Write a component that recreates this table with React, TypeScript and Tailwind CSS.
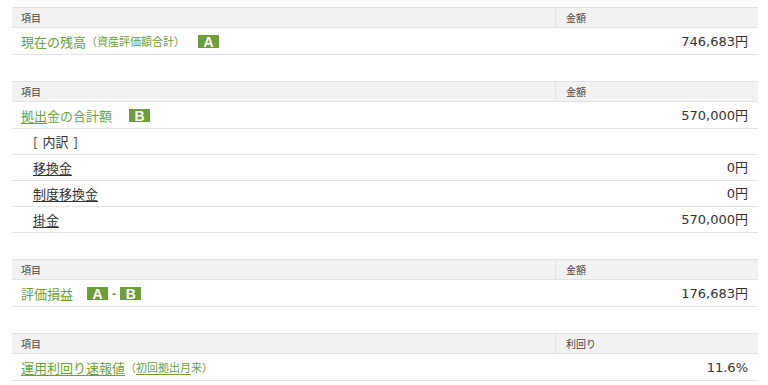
import React from "react";

const JP = { fontFamily: '"Noto Sans CJK JP", "Noto Sans", sans-serif' };
const NUM = { fontFamily: '"DejaVu Sans", "Noto Sans CJK JP", sans-serif' };

function Header({ right }: { right: string }) {
  return (
    <div className="flex h-[21px] border-y border-[#e2e2e2] bg-[#f2f2f2] text-[10px] leading-none text-[#444]" style={JP}>
      <div className="flex w-[544px] items-center border-r border-[#e4e4e4] pl-[9px]">項目</div>
      <div className="flex flex-1 items-center pl-[10px]">{right}</div>
    </div>
  );
}

function Badge({ children }: { children: React.ReactNode }) {
  return (
    <span
      className="inline-flex h-[13px] w-[21px] items-center justify-center bg-[#6c9f3a] pt-[1px] text-[14px] font-bold leading-none text-white"
      style={{ fontFamily: '"Liberation Sans", Arial, sans-serif' }}
    >
      {children}
    </span>
  );
}

function Row({ label, value, h = "h-[27px]" }: { label: React.ReactNode; value: string; h?: string }) {
  return (
    <div className={`flex ${h} items-center justify-between border-b border-[#e4e4e4] pl-[9px] pr-[10px]`}>
      <div className="flex items-center text-[13px] leading-none" style={JP}>
        {label}
      </div>
      <div className="text-[13px] leading-none text-[#333]" style={NUM}>
        {value}
      </div>
    </div>
  );
}

export default function App() {
  const green = "text-[#6aa23c]";
  return (
    <div className="min-h-[385px] w-[768px] bg-white pt-[7px]">
      <div className="ml-[12px] flex w-[746px] flex-col">
        <Header right="金額" />
        <Row
          label={
            <span className={`flex items-center ${green}`}>
              <span>現在の残高</span>
              <span className="text-[11px]">（資産評価額合計）</span>
              <span className="ml-[13px]">
                <Badge>A</Badge>
              </span>
            </span>
          }
          value="746,683円"
        />

        <div className="h-[26px]" />
        <Header right="金額" />
        <Row
          label={
            <span className={`flex items-center ${green}`}>
              <span>
                <span className="underline decoration-1 underline-offset-2">拠出</span>金の合計額
              </span>
              <span className="ml-[17px]">
                <Badge>B</Badge>
              </span>
            </span>
          }
          value="570,000円"
        />
        <Row
          h="h-[26px]"
          label={
            <span className="flex items-center pl-[12px] text-[#333]">
              <span>[</span>
              <span className="mx-[5px]">内訳</span>
              <span>]</span>
            </span>
          }
          value=""
        />
        <Row
          h="h-[26px]"
          label={<span className="pl-[12px] text-[#333] underline decoration-1 underline-offset-2">移換金</span>}
          value="0円"
        />
        <Row
          h="h-[26px]"
          label={<span className="pl-[12px] text-[#333] underline decoration-1 underline-offset-2">制度移換金</span>}
          value="0円"
        />
        <Row
          h="h-[26px]"
          label={<span className="pl-[12px] text-[#333] underline decoration-1 underline-offset-2">掛金</span>}
          value="570,000円"
        />

        <div className="h-[26px]" />
        <Header right="金額" />
        <Row
          label={
            <span className={`flex items-center ${green}`}>
              <span>評価損益</span>
              <span className="ml-[14px]">
                <Badge>A</Badge>
              </span>
              <span className="mx-[4px] text-[13px] font-bold" style={{ fontFamily: '"Liberation Sans", sans-serif' }}>-</span>
              <Badge>B</Badge>
            </span>
          }
          value="176,683円"
        />

        <div className="h-[26px]" />
        <Header right="利回り" />
        <Row
          label={
            <span className={`flex items-center ${green}`}>
              <span className="underline decoration-1 underline-offset-2">運用利回り速報値</span>
              <span className="text-[11px]">
                （<span className="underline decoration-1 underline-offset-2">初回拠出月</span>来）
              </span>
            </span>
          }
          value="11.6%"
        />
      </div>
    </div>
  );
}
